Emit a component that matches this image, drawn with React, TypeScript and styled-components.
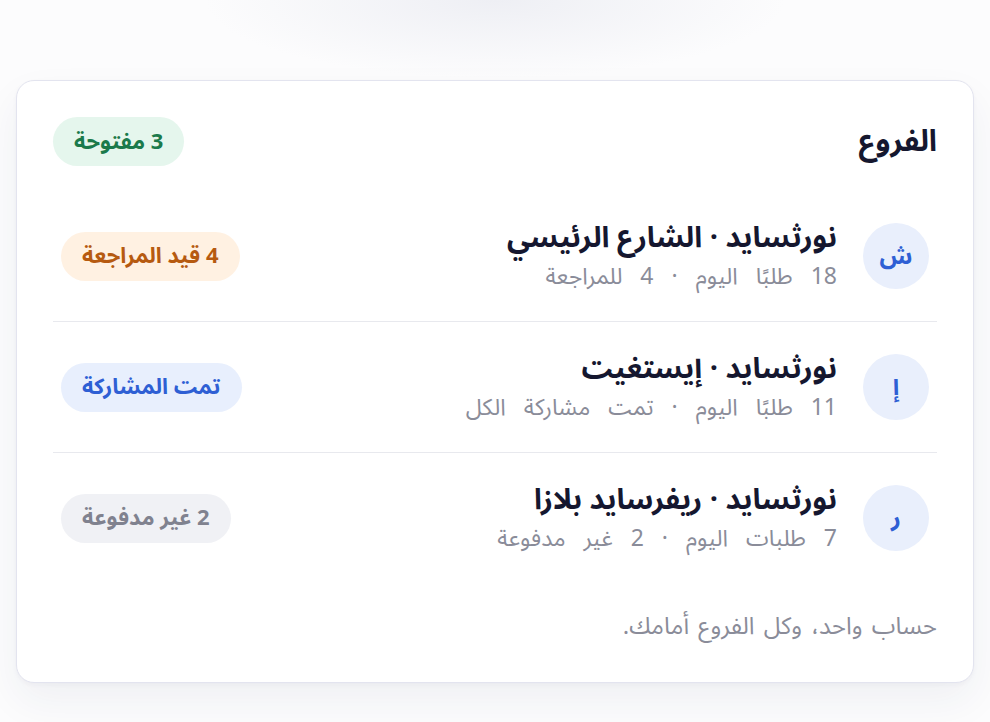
import styled, { createGlobalStyle } from "styled-components";

const GlobalStyle = createGlobalStyle`
  html, body {
    margin: 0;
    padding: 0;
  }

  body {
    min-height: 100vh;
    background:
      radial-gradient(ellipse 290px 78px at 50% 0, #eeeff4 0%, rgba(238, 239, 244, 0) 100%),
      #fcfcfd;
    font-family: "Noto Sans Arabic", "Noto Sans", "DejaVu Sans", sans-serif;
  }
`;

type Tone = "green" | "orange" | "blue" | "gray";

const tones: Record<Tone, { bg: string; fg: string }> = {
  green: { bg: "#e5f6ed", fg: "#1b7a4b" },
  orange: { bg: "#fff1e2", fg: "#b65a10" },
  blue: { bg: "#e8effd", fg: "#2e5fd4" },
  gray: { bg: "#f0f1f5", fg: "#80828f" },
};

const branches = [
  {
    letter: "ش",
    name: "نورثسايد · الشارع الرئيسي",
    meta: "18 طلبًا اليوم · 4 للمراجعة",
    badge: "4 قيد المراجعة",
    tone: "orange" as Tone,
  },
  {
    letter: "إ",
    name: "نورثسايد · إيستغيت",
    meta: "11 طلبًا اليوم · تمت مشاركة الكل",
    badge: "تمت المشاركة",
    tone: "blue" as Tone,
  },
  {
    letter: "ر",
    name: "نورثسايد · ريفرسايد بلازا",
    meta: "7 طلبات اليوم · 2 غير مدفوعة",
    badge: "2 غير مدفوعة",
    tone: "gray" as Tone,
  },
];

const App = () => {
  return (
    <Page>
      <GlobalStyle />
      <Card dir="rtl">
        <Header>
          <Title>الفروع</Title>
          <Badge $tone="green">3 مفتوحة</Badge>
        </Header>

        <List>
          {branches.map((b) => (
            <Row key={b.name}>
              <Avatar>{b.letter}</Avatar>
              <Info>
                <Name>{b.name}</Name>
                <Meta>{b.meta}</Meta>
              </Info>
              <RowBadge $tone={b.tone}>{b.badge}</RowBadge>
            </Row>
          ))}
        </List>

        <Footer>حساب واحد، وكل الفروع أمامك.</Footer>
      </Card>
    </Page>
  );
};

export default App;

const Page = styled.main`
  padding: 80px 16px 40px;
`;

const Card = styled.section`
  background: #ffffff;
  border: 1px solid #e3e4ef;
  border-radius: 18px;
  padding: 36px 36px 39px;
  box-shadow: 0 18px 40px rgba(40, 50, 90, 0.06), 0 2px 4px rgba(40, 50, 90, 0.04);
`;

const Header = styled.header`
  display: flex;
  align-items: center;
  justify-content: space-between;
  height: 49px;
`;

const Title = styled.h2`
  margin: 0;
  font-size: 30px;
  line-height: 1.3;
  font-weight: 700;
  color: #15172f;
`;

const Badge = styled.span<{ $tone: Tone }>`
  display: inline-flex;
  align-items: center;
  height: 49px;
  padding: 0 21px;
  border-radius: 999px;
  font-size: 22px;
  line-height: 1;
  font-weight: 700;
  white-space: nowrap;
  background: ${(p) => tones[p.$tone].bg};
  color: ${(p) => tones[p.$tone].fg};
`;

const RowBadge = styled(Badge)`
  margin-inline-start: auto;
`;

const List = styled.ul`
  list-style: none;
  margin: 25px 0 0;
  padding: 0;
`;

const Row = styled.li`
  display: flex;
  align-items: center;
  gap: 26px;
  padding: 26px 8px;
  border-bottom: 1px solid #e8e9ee;

  &:last-child {
    border-bottom: 0;
  }
`;

const Avatar = styled.div`
  flex: none;
  width: 66px;
  height: 66px;
  border-radius: 50%;
  background: #e9effc;
  color: #2e5fd4;
  display: grid;
  place-items: center;
  font-size: 24px;
  font-weight: 700;
`;

const Info = styled.div`
  display: flex;
  flex-direction: column;
`;

const Name = styled.div`
  font-size: 29px;
  font-weight: 700;
  color: #15172f;
  line-height: 42px;
`;

const Meta = styled.div`
  font-size: 23px;
  color: #8a8c99;
  line-height: 36px;
  word-spacing: 12px;
`;

const Footer = styled.p`
  margin: 28px 0 0;
  font-size: 24px;
  color: #8a8c99;
  line-height: 32px;
  word-spacing: 3px;
`;
